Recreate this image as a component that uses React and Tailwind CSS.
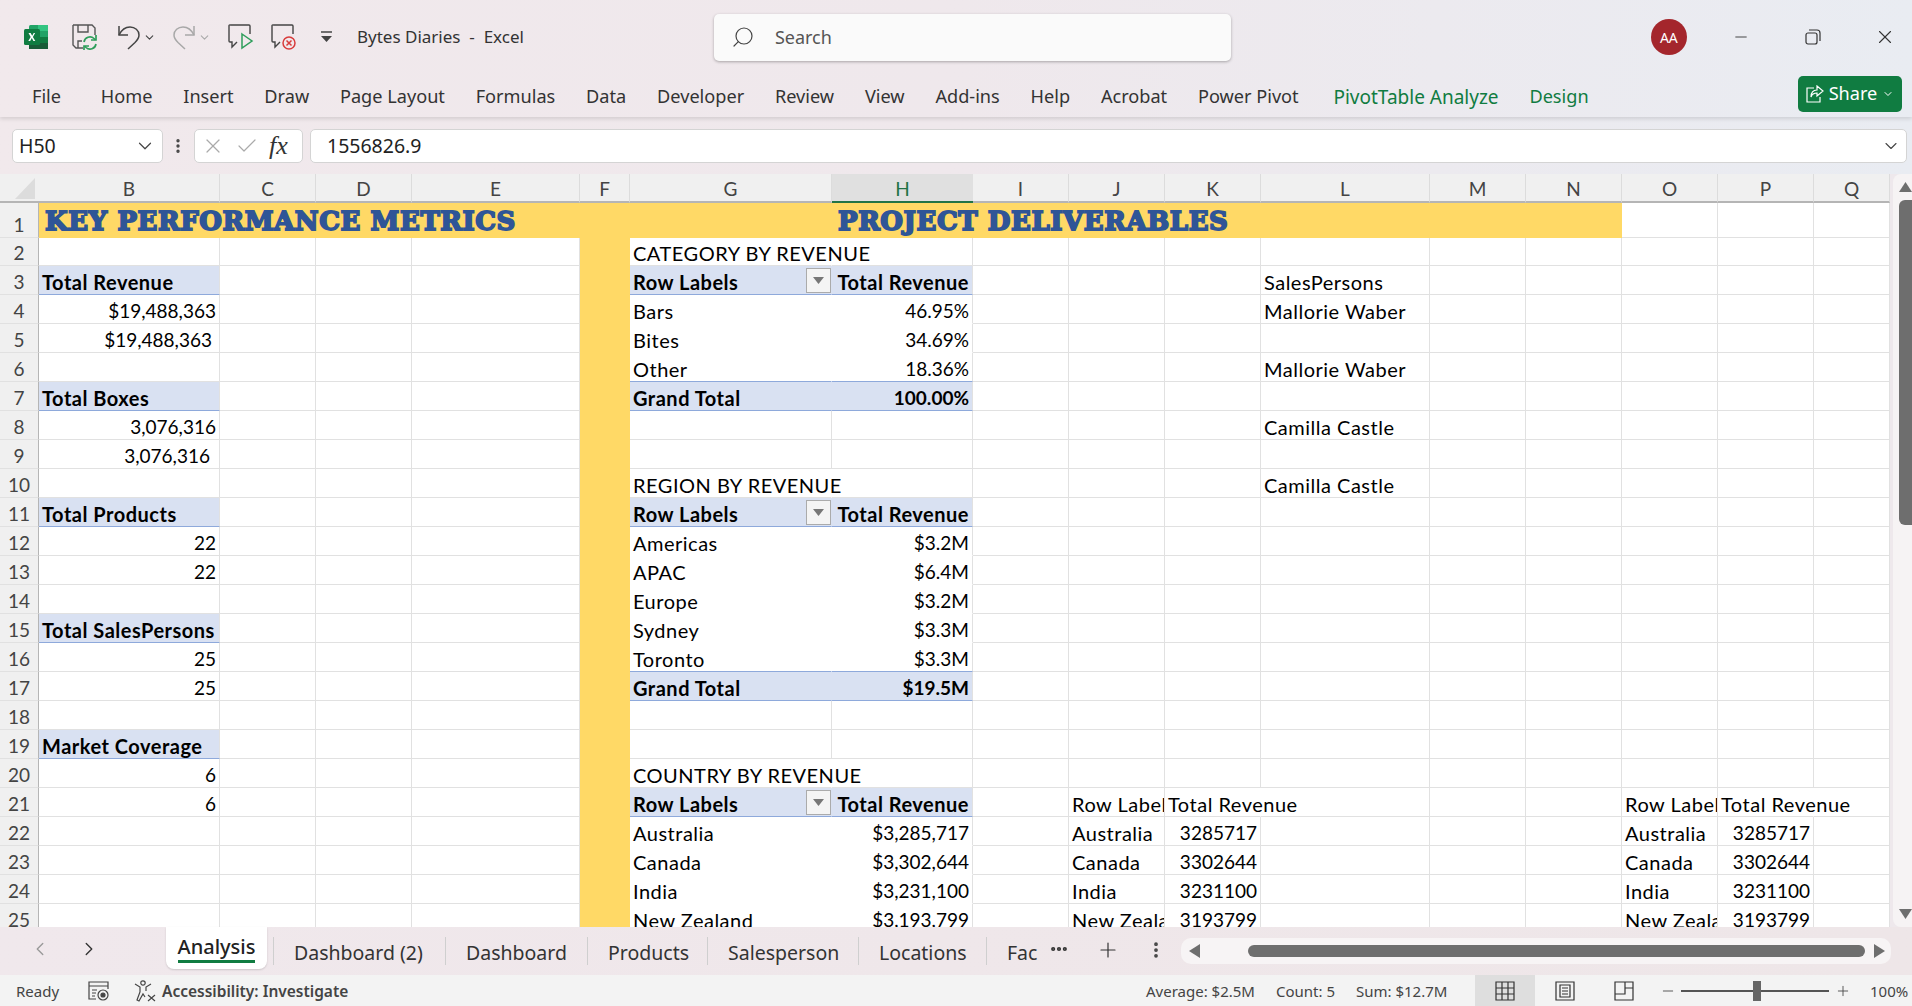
import { ChevronDown, ChevronLeft, ChevronRight, Minus, Plus, X, Check, Search, MoreVertical, MoreHorizontal } from "lucide-react";

const columns = ["B", "C", "D", "E", "F", "G", "H", "I", "J", "K", "L", "M", "N", "O", "P", "Q"];

const ribbonTabs = ["File", "Home", "Insert", "Draw", "Page Layout", "Formulas", "Data", "Developer", "Review", "View", "Add-ins", "Help", "Acrobat", "Power Pivot"];

const sheetTabs = [
  { label: "Dashboard (2)", className: "w-[172px]" },
  { label: "Dashboard", className: "w-[142px]" },
  { label: "Products", className: "w-[120px]" },
  { label: "Salesperson", className: "w-[151px]" },
  { label: "Locations", className: "w-[128px]" },
];

const HEAD = "bg-[#d9e1f2] font-bold border-b-[#8ea9db]";
const PLAIN = "border-b-transparent";

// only the cells that differ from an empty gridline cell
const cells = {
  B3: { t: "Total Revenue", c: HEAD },
  B4: { t: "$19,488,363", r: true },
  B5: { t: "$19,488,363", r: true, pad: "pr-[4px]" },
  B7: { t: "Total Boxes", c: HEAD },
  B8: { t: "3,076,316", r: true },
  B9: { t: "3,076,316", r: true, pad: "pr-[6px]" },
  B11: { t: "Total Products", c: HEAD },
  B12: { t: "22", r: true },
  B13: { t: "22", r: true },
  B15: { t: "Total SalesPersons", c: HEAD },
  B16: { t: "25", r: true },
  B17: { t: "25", r: true },
  B19: { t: "Market Coverage", c: HEAD },
  B20: { t: "6", r: true },
  B21: { t: "6", r: true },
  G2: { t: "CATEGORY BY REVENUE", c: "border-r-transparent", over: true },
  G10: { t: "REGION BY REVENUE", c: "border-r-transparent", over: true },
  G20: { t: "COUNTRY BY REVENUE", c: "border-r-transparent", over: true },
  L3: { t: "SalesPersons" },
  L4: { t: "Mallorie Waber" },
  L6: { t: "Mallorie Waber" },
  L8: { t: "Camilla Castle" },
  L10: { t: "Camilla Castle" },
};

function addPivot(startRow, rows, total) {
  cells["G" + startRow] = { t: "Row Labels", c: HEAD + " border-r-transparent", filter: true };
  cells["H" + startRow] = { t: "Total Revenue", c: HEAD, r: true };
  rows.forEach(([label, value], i) => {
    const row = startRow + i + 1;
    const last = total && i === rows.length - 1;
    const edge = last ? "border-b-[#8ea9db]" : PLAIN;
    cells["G" + row] = { t: label, c: "border-r-transparent " + edge };
    cells["H" + row] = { t: value, r: true, c: edge };
  });
  if (total) {
    const row = startRow + rows.length + 1;
    cells["G" + row] = { t: "Grand Total", c: HEAD + " border-r-transparent" };
    cells["H" + row] = { t: total, c: HEAD, r: true };
  }
}

addPivot(3, [["Bars", "46.95%"], ["Bites", "34.69%"], ["Other", "18.36%"]], "100.00%");
addPivot(11, [["Americas", "$3.2M"], ["APAC", "$6.4M"], ["Europe", "$3.2M"], ["Sydney", "$3.3M"], ["Toronto", "$3.3M"]], "$19.5M");
addPivot(21, [["Australia", "$3,285,717"], ["Canada", "$3,302,644"], ["India", "$3,231,100"], ["New Zealand", "$3,193,799"]]);

function addCopy(a, b) {
  cells[a + "21"] = { t: "Row Label" };
  cells[b + "21"] = { t: "Total Revenue", c: "border-r-transparent", over: true };
  [["Australia", "3285717"], ["Canada", "3302644"], ["India", "3231100"], ["New Zealand", "3193799"]].forEach(([label, value], i) => {
    cells[a + (22 + i)] = { t: label };
    cells[b + (22 + i)] = { t: value, r: true };
  });
}
addCopy("J", "K");
addCopy("O", "P");

function ExcelLogo() {
  return (
    <svg width="24" height="24" viewBox="0 0 24 24">
      <rect x="5" y="0" width="19" height="24" rx="1.5" fill="#21a366" />
      <rect x="14" y="0" width="10" height="6" fill="#33c481" />
      <rect x="14" y="12" width="10" height="6" fill="#107c41" />
      <rect x="5" y="12" width="9" height="12" fill="#185c37" />
      <rect x="14" y="18" width="10" height="6" fill="#185c37" />
      <rect x="0" y="4" width="16" height="16" rx="1.5" fill="#107c41" />
      <path d="M4.5 8l2.2 4-2.4 4h1.9l1.6-2.9 1.6 2.9h1.9l-2.4-4 2.2-4H9.7L8.2 10.8 6.6 8z" fill="#fff" />
    </svg>
  );
}

function SaveSync() {
  return (
    <svg width="26" height="26" viewBox="0 0 26 26" fill="none">
      <path d="M1 1h19l3 3v7M1 1v20l3 3h7" stroke="#555" strokeWidth="1.4" />
      <path d="M6 1v7h10V1M6 24v-7h4" stroke="#555" strokeWidth="1.4" />
      <path d="M12 18a6 6 0 0 1 10-3.5l1.500 1.500M24 20a6 6 0 0 1-10 3.500L12.500 22" stroke="#2e9e5b" strokeWidth="1.700" />
      <path d="M24 11v5h-5M12 27v-5h5" stroke="#2e9e5b" strokeWidth="1.700" />
    </svg>
  );
}

function Undo({ color }) {
  return (
    <svg width="24" height="26" viewBox="0 0 24 26" fill="none" stroke={color} strokeWidth="1.500">
      <path d="M2 2v9h9" />
      <path d="M2 11C5 5 9 3 13 3c5 0 9 3.500 9 8 0 3-2 5.500-4 7.500L11 25" />
    </svg>
  );
}

function Redo({ color }) {
  return (
    <svg width="24" height="26" viewBox="0 0 24 26" fill="none" stroke={color} strokeWidth="1.500">
      <path d="M22 2v9h-9" />
      <path d="M22 11C19 5 15 3 11 3 6 3 2 6.500 2 11c0 3 2 5.500 4 7.500L13 25" />
    </svg>
  );
}

function MacroBubble({ children }) {
  return (
    <svg width="26" height="26" viewBox="0 0 26 26" fill="none">
      <path d="M13 1H2.500A1 1 0 0 0 1 2v15a1 1 0 0 0 1 1h2v5l5-5M13 1h8a1 1 0 0 1 1 1v8" stroke="#444" strokeWidth="1.400" />
      {children}
    </svg>
  );
}

function SheetCorner() {
  return (
    <svg width="20" height="21" viewBox="0 0 20 21">
      <path d="M20 0v21H0z" fill="#dcdcdc" />
    </svg>
  );
}

function FilterButton() {
  return (
    <span className="-mr-[3px] flex h-[25px] w-[25px] shrink-0 items-center justify-center self-center border border-[#ababab] bg-[#f4f4f4]">
      <svg width="11" height="7" viewBox="0 0 11 7">
        <path d="M0 0h11L5.500 7z" fill="#777" />
      </svg>
    </span>
  );
}

function Cell({ id, col }) {
  const cell = cells[id];
  if (col === "F") return <div className="bg-[#ffd966]" />;
  // Lato is narrower than Calibri for words, digits already fit
  const isNumber = cell && /^[$\d]/.test(cell.t);
  return (
    <div
      className={`flex items-end justify-between whitespace-nowrap border-r border-b border-[#e1e1e1] px-[3px] leading-[24px] text-black ${
        isNumber ? "text-[19px]" : "text-[20px] tracking-[0.5px]"
      } ${cell?.over ? "overflow-visible" : "overflow-hidden"} ${cell?.r ? "justify-end" : ""} ${cell?.c ?? ""}`}
    >
      {cell && <span className={cell.pad ?? ""}>{cell.t}</span>}
      {cell?.filter && <FilterButton />}
    </div>
  );
}

function Sheet() {
  const rows = Array.from({ length: 25 }, (_, i) => i + 1);
  return (
    <div className="w-[1890px] shrink-0 overflow-hidden bg-white font-['Lato',sans-serif]">
      <div className="grid grid-cols-[39px_181px_96px_96px_168px_50px_202px_141px_96px_96px_96px_169px_96px_96px_96px_96px_76px] grid-rows-[29px_35px_28px_repeat(23,29px)]">
        <div className="flex items-end justify-end border-b-2 border-[#b5b5b5] bg-[#f0f0f0] pr-[4px] pb-[2px]">
          <SheetCorner />
        </div>
        {columns.map((col) =>
          col === "H" ? (
            <div key={col} className="flex items-center justify-center border-b-2 border-[#217346] bg-[#e0e0e0] pt-[3px] text-[19px] text-[#217346]">
              {col}
            </div>
          ) : (
            <div key={col} className="flex items-center justify-center border-r border-b-2 border-r-[#dcdcdc] border-b-[#b5b5b5] bg-[#f0f0f0] pt-[3px] text-[19px] text-[#444]">
              {col}
            </div>
          )
        )}
        {rows.map((row) => (
          <div key={row} className="contents">
            <div className="flex items-end justify-center border-r border-b border-r-[#b5b5b5] border-b-[#e1e1e1] bg-[#f0f0f0] text-[19px] leading-[24px] text-[#444]">
              {row}
            </div>
            {row === 1 ? (
              <>
                <div className="col-span-5 flex items-center bg-[#ffd966] pt-[2px] pl-[6px]">
                  <Title text="KEY PERFORMANCE METRICS" />
                </div>
                <div className="col-span-8 flex items-center bg-[#ffd966] pt-[2px] pl-[208px]">
                  <Title text="PROJECT DELIVERABLES" />
                </div>
                <Cell id="O1" col="O" />
                <Cell id="P1" col="P" />
                <Cell id="Q1" col="Q" />
              </>
            ) : (
              columns.map((col) => <Cell key={col} id={col + row} col={col} />)
            )}
          </div>
        ))}
      </div>
    </div>
  );
}

function Title({ text }) {
  return (
    <span className="whitespace-nowrap font-['DejaVu_Serif',serif] text-[26px] font-bold tracking-[0.6px] text-[#2f5597] [-webkit-text-stroke:1.8px_#2f5597]">
      {text}
    </span>
  );
}

function VerticalScroll() {
  return (
    <div className="ml-[3px] flex w-[19px] flex-col items-end rounded-l-[8px] bg-[#f6f3f4]">
      <div className="flex h-[26px] w-full items-center justify-center pl-[5px]">
        <svg width="13" height="10" viewBox="0 0 13 10"><path d="M6.500 0L13 10H0z" fill="#6e6e6e" /></svg>
      </div>
      <div className="h-[325px] w-[13px] rounded-l-[6px] bg-[#6e6e6e]" />
      <div className="flex-1" />
      <div className="flex h-[26px] w-full items-center justify-center pl-[5px]">
        <svg width="13" height="10" viewBox="0 0 13 10"><path d="M0 0h13L6.500 10z" fill="#6e6e6e" /></svg>
      </div>
    </div>
  );
}

function TabBar() {
  return (
    <div className="flex h-[48px] items-start bg-gradient-to-r from-[#f0e8ec] to-[#eee6e8] text-[#333]">
      <ChevronLeft size={22} strokeWidth={1.5} className="mt-[11px] ml-[29px] text-[#999]" />
      <ChevronRight size={22} strokeWidth={1.5} className="mt-[11px] ml-[27px] text-[#333]" />
      <div className="ml-[66px] flex h-[42px] w-[101px] flex-col items-center rounded-b-[8px] bg-white shadow-[0_1px_2px_rgba(0,0,0,0.15)]">
        <span className="mt-[7px] text-[20px] leading-[26px] font-medium text-[#222]">Analysis</span>
        <span className="h-[3px] w-[77px] bg-[#107c41]" />
      </div>
      <div className="mt-[10px] ml-[6px] flex">
        {sheetTabs.map((tab) => (
          <div key={tab.label} className={`flex h-[28px] items-center border-l border-[#cfcfcf] pt-[4px] pl-[20px] text-[19.500px] ${tab.className}`}>
            {tab.label}
          </div>
        ))}
        <div className="flex h-[28px] w-[59px] items-center border-l border-[#cfcfcf] pt-[4px] pl-[20px] text-[19.500px]">Fac</div>
      </div>
      <MoreHorizontal size={20} strokeWidth={3} className="mt-[12px] ml-[4px] text-[#333]" />
      <Plus size={24} strokeWidth={1.200} className="mt-[11px] ml-[27px] text-[#333]" />
      <MoreVertical size={20} strokeWidth={2.500} className="mt-[13px] ml-[26px] text-[#444]" />
      <div className="mt-[11px] ml-[15px] flex h-[26px] w-[710px] items-center rounded-[10px] bg-[#f7f4f5] pr-[6px] pl-[8px]">
        <svg width="11" height="14" viewBox="0 0 11 14"><path d="M11 0v14L0 7z" fill="#6e6e6e" /></svg>
        <div className="ml-[48px] h-[12px] w-[617px] rounded-[6px] bg-[#6e6e6e]" />
        <svg className="ml-[9px]" width="11" height="14" viewBox="0 0 11 14"><path d="M0 0v14l11-7z" fill="#6e6e6e" /></svg>
      </div>
    </div>
  );
}

function StatusBar() {
  return (
    <div className="flex h-[31px] items-center bg-[#f3f3f3] text-[15px] text-[#444]">
      <span className="ml-[16px] w-[72px] pt-[2px]">Ready</span>
      <svg width="21" height="20" viewBox="0 0 21 20" fill="none" stroke="#444" strokeWidth="1.200">
        <path d="M1 1h19v4H1zM1 5v13h7M20 5v3" />
        <path d="M4 9h5M4 12h4M4 15h3" />
        <circle cx="15" cy="14" r="5" />
        <circle cx="15" cy="14" r="2" fill="#444" />
      </svg>
      <svg className="ml-[25px]" width="22" height="22" viewBox="0 0 22 22" fill="none" stroke="#444" strokeWidth="1.200">
        <circle cx="9" cy="3" r="2.200" />
        <path d="M1 4l5 3v5l-3 8 2 1 4-7 2 3M17 4l-5 3v4" />
        <path d="M14 15l7 6M21 15l-7 6" />
      </svg>
      <span className="ml-[6px] w-[189px] whitespace-nowrap pt-[2px] text-[15.500px] font-semibold">Accessibility: Investigate</span>
      <span className="ml-[795px] w-[130px] pt-[2px]">Average: $2.5M</span>
      <span className="w-[80px] pt-[2px]">Count: 5</span>
      <span className="w-[119px] pt-[2px]">Sum: $12.7M</span>
      <div className="flex h-full w-[60px] items-center justify-center bg-[#dedede]">
        <svg width="20" height="20" viewBox="0 0 20 20" fill="none" stroke="#333" strokeWidth="1.200">
          <path d="M1 1h18v18H1zM1 7h18M1 13h18M7 1v18M13 1v18" />
        </svg>
      </div>
      <div className="flex w-[60px] items-center justify-center">
        <svg width="20" height="20" viewBox="0 0 20 20" fill="none" stroke="#333" strokeWidth="1.200">
          <path d="M1 1h18v18H1zM5 4h10v12H5zM7 7h6M7 10h6M7 13h6" />
        </svg>
      </div>
      <div className="flex w-[58px] items-center justify-center">
        <svg width="20" height="20" viewBox="0 0 20 20" fill="none" stroke="#333" strokeWidth="1.200">
          <path d="M1 1h18v18H1zM1 13h10V1M11 7h8" />
        </svg>
      </div>
      <Minus size={16} strokeWidth={1.300} className="ml-[7px]" />
      <div className="ml-[5px] flex h-[14px] w-[148px] items-center">
        <div className="h-[2px] w-[72px] bg-[#555]" />
        <div className="h-[20px] w-[8px] shrink-0 bg-[#666]" />
        <div className="h-[2px] w-[68px] bg-[#555]" />
      </div>
      <Plus size={16} strokeWidth={1.300} className="ml-[6px]" />
      <span className="ml-[19px] pt-[2px]">100%</span>
    </div>
  );
}

function TitleBar() {
  return (
    <div className="flex h-[60px] items-center pt-[14px] text-[#333]">
      <div className="ml-[24px]"><ExcelLogo /></div>
      <div className="ml-[24px]"><SaveSync /></div>
      <div className="ml-[19px]"><Undo color="#444" /></div>
      <ChevronDown size={13} strokeWidth={2} className="ml-[2px] text-[#444]" />
      <div className="ml-[16px]"><Redo color="#a8a8a8" /></div>
      <ChevronDown size={13} strokeWidth={2} className="ml-[2px] text-[#aaa]" />
      <div className="ml-[17px]">
        <MacroBubble>
          <path d="M14 10l10 7-10 7z" stroke="#2e9e5b" strokeWidth="1.500" />
        </MacroBubble>
      </div>
      <div className="ml-[17px]">
        <MacroBubble>
          <circle cx="18" cy="19" r="6" stroke="#d83b3b" strokeWidth="1.500" />
          <path d="M15.500 16.500l5 5M20.500 16.500l-5 5" stroke="#d83b3b" strokeWidth="1.500" />
        </MacroBubble>
      </div>
      <svg className="ml-[23px]" width="13" height="13" viewBox="0 0 13 13" fill="none">
        <path d="M1 1h11" stroke="#444" strokeWidth="1.500" />
        <path d="M1 5h11L6.500 11z" fill="#444" />
      </svg>
      <span className="ml-[24px] whitespace-pre text-[17px]">Bytes Diaries  -  Excel</span>
      <div className="-mt-[14px] ml-[190px] flex h-[47px] w-[517px] translate-y-[7px] items-center rounded-[5px] bg-[#fafafa] pl-[17px] shadow-[0_1px_3px_rgba(0,0,0,0.3)]">
        <Search size={24} strokeWidth={1.200} className="-scale-x-100 text-[#444]" />
        <span className="ml-[20px] text-[18px] text-[#555]">Search</span>
      </div>
      <div className="ml-[420px] flex h-[36px] w-[36px] items-center justify-center rounded-full bg-[#a4262c] text-[14px] text-white">AA</div>
      <Minus size={18} strokeWidth={1.200} className="ml-[45px]" />
      <svg className="ml-[55px]" width="16" height="16" viewBox="0 0 16 16" fill="none" stroke="#333" strokeWidth="1.200">
        <rect x="1" y="4" width="11" height="11" rx="2" />
        <path d="M4 1h8a3 3 0 0 1 3 3v8" />
      </svg>
      <X size={22} strokeWidth={1.200} className="ml-[53px]" />
    </div>
  );
}

function RibbonTabs() {
  return (
    <div className="flex h-[57px] items-center pl-[32px] text-[18.150px] text-[#333]">
      <div className="flex items-center gap-[30.800px] pt-[17px]">
        {ribbonTabs.map((tab, i) => (
          <span key={tab} className={i === 0 ? "mr-[9px]" : ""}>{tab}</span>
        ))}
        <span className="ml-[4px] text-[19px] text-[#107c41]">PivotTable Analyze</span>
        <span className="text-[#107c41]">Design</span>
      </div>
      <div className="mt-[11px] mr-[10px] ml-auto flex h-[36px] w-[104px] items-center justify-center gap-[5px] rounded-[5px] bg-[#107c41] text-white">
        <svg width="18" height="18" viewBox="0 0 18 18" fill="none" stroke="#fff" strokeWidth="1.200">
          <path d="M8 3H1v14h13v-5" />
          <path d="M11 1l6 5-6 5V8c-3 0-5 1-6 4 0-4 2-7 6-7z" />
        </svg>
        <span>Share</span>
        <ChevronDown size={12} strokeWidth={2} />
      </div>
    </div>
  );
}

function FormulaBar() {
  return (
    <div className="flex h-[57px] items-center pl-[12px]">
      <div className="flex h-[34px] w-[151px] items-center justify-between rounded-[5px] border border-[#d4d4d4] bg-white pr-[6px] pl-[6px] text-[19.500px] text-[#222]">
        H50
        <ChevronDown size={22} strokeWidth={1.300} className="text-[#444]" />
      </div>
      <MoreVertical size={18} strokeWidth={2.500} className="ml-[6px] text-[#444]" />
      <div className="ml-[7px] flex h-[34px] w-[109px] items-center gap-[10px] rounded-[5px] border border-[#d4d4d4] bg-white pl-[6px]">
        <X size={24} strokeWidth={1.200} className="text-[#aaa]" />
        <Check size={24} strokeWidth={1.200} className="text-[#aaa]" />
        <span className="font-['Liberation_Serif',serif] text-[26px] leading-none text-[#333] italic">fx</span>
      </div>
      <div className="ml-[7px] flex h-[34px] w-[1597px] items-center justify-between rounded-[5px] border border-[#d4d4d4] bg-white pr-[5px] pl-[16px] text-[19.500px] text-[#222]">
        1556826.9
        <ChevronDown size={20} strokeWidth={1.300} className="text-[#444]" />
      </div>
    </div>
  );
}

export default function App() {
  return (
    <div className="flex h-[1006px] w-[1912px] flex-col overflow-hidden bg-[#f0e8ec] font-['Noto_Sans',sans-serif]">
      <div className="bg-gradient-to-r from-[#f1e9ec] via-[#efe8ec] to-[#e9ecf2]">
        <div className="shadow-[0_2px_4px_rgba(0,0,0,0.12)]">
          <TitleBar />
          <RibbonTabs />
        </div>
        <FormulaBar />
      </div>
      <div className="flex h-[753px] bg-[#eee8ec]">
        <Sheet />
        <VerticalScroll />
      </div>
      <TabBar />
      <StatusBar />
    </div>
  );
}
